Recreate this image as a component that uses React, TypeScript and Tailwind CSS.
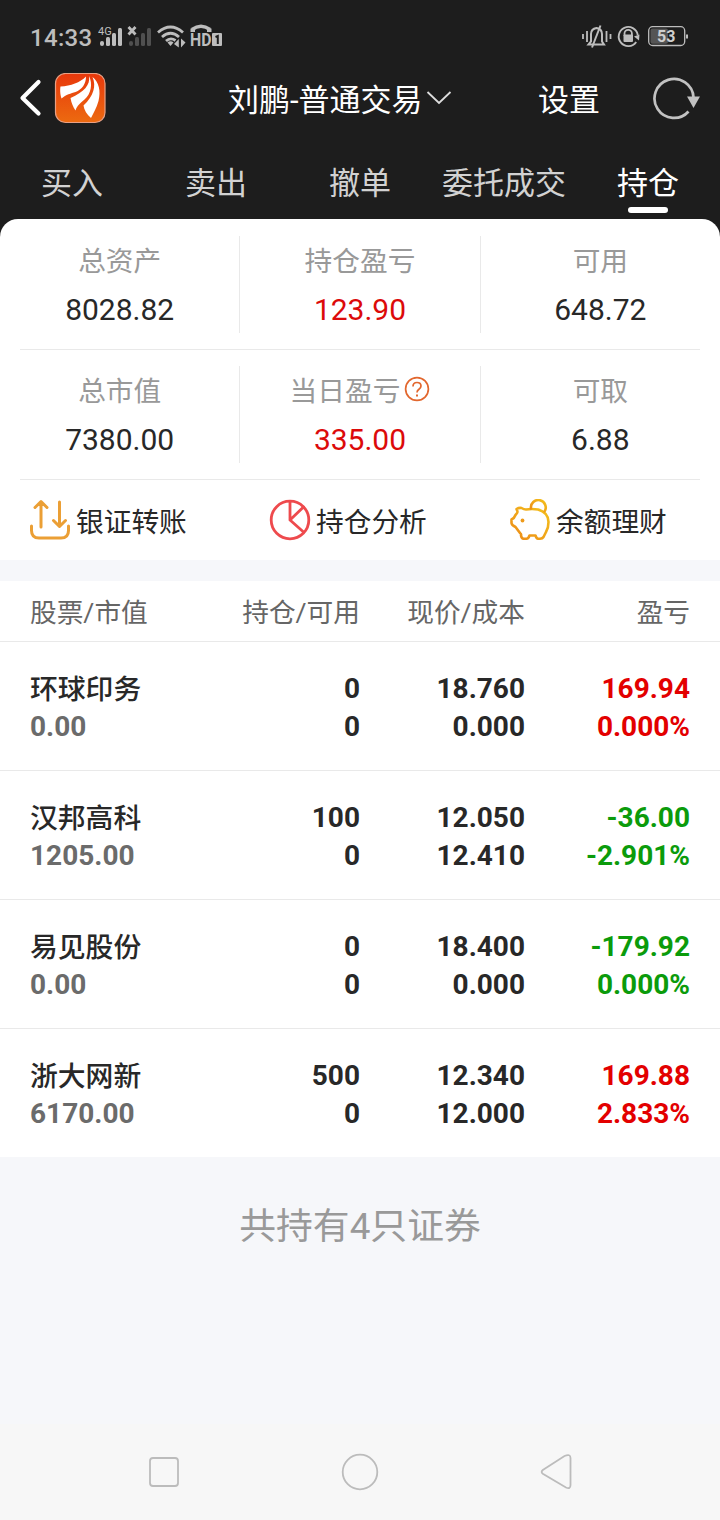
import React from 'react';

type Tone = 'red' | 'green' | 'dark';

const toneClass: Record<Tone, string> = {
  red: 'text-[#e30000]',
  green: 'text-[#0b9b0b]',
  dark: 'text-[#282828]',
};

const holdings: { name: string; value: string; qty: string; avail: string; price: string; cost: string; pl: string; pct: string; tone: Tone }[] = [
  { name: '环球印务', value: '0.00', qty: '0', avail: '0', price: '18.760', cost: '0.000', pl: '169.94', pct: '0.000%', tone: 'red' },
  { name: '汉邦高科', value: '1205.00', qty: '100', avail: '0', price: '12.050', cost: '12.410', pl: '-36.00', pct: '-2.901%', tone: 'green' },
  { name: '易见股份', value: '0.00', qty: '0', avail: '0', price: '18.400', cost: '0.000', pl: '-179.92', pct: '0.000%', tone: 'green' },
  { name: '浙大网新', value: '6170.00', qty: '500', avail: '0', price: '12.340', cost: '12.000', pl: '169.88', pct: '2.833%', tone: 'red' },
];

function StatusBar() {
  return (
    <div className="flex h-[74px] items-center pl-[30px] pr-[32px] text-[#bdbdbd]">
      <span className="w-[68px] pt-[1px] text-[24px] leading-[30px] font-medium tracking-[0.3px]">14:33</span>
      <svg className="h-[26px] w-[126px]" viewBox="98 24 126 26" fill="#bdbdbd">
        <text x="98" y="35" fontSize="11" fontFamily="Roboto">4G</text>
        <rect x="100" y="41" width="4" height="5" rx="2" />
        <rect x="106" y="37" width="4" height="9" rx="1.5" />
        <rect x="112" y="33" width="4" height="13" rx="1.5" />
        <rect x="118" y="28" width="4" height="18" rx="1.5" />
        <path d="M128.500 27l7 7.500M135.500 27l-7 7.500" stroke="#bdbdbd" strokeWidth="2.800" />
        <g fill="#505050">
          <rect x="129" y="41" width="4" height="5" rx="2" />
          <rect x="135" y="37" width="4" height="9" rx="1.5" />
          <rect x="141" y="33" width="4" height="13" rx="1.5" />
          <rect x="147" y="28" width="4" height="18" rx="1.500" />
        </g>
        <g fill="none" stroke="#bdbdbd" strokeWidth="2.800">
          <path d="M158 32.500Q170.500 21.500 183 32.500" />
          <path d="M162 37Q170.500 29.500 179 37" />
          <path d="M166 41Q170.500 37 175.500 40.500" />
        </g>
        <path d="M167.500 42.500Q170.500 40 173.500 42.500L170.500 46Z" />
        <path d="M178.800 39v8.500l-4.800-3.500zM181 38.500l4.500 4-4.500 5z" />
        <path d="M192 29.500Q201 23 210 29.500" fill="none" stroke="#bdbdbd" strokeWidth="3.400" />
        <path d="M190.500 28.500h4.500v3.500h-4.500zM207 28.500h4.500v3.500H207z" />
        <text x="190" y="46" fontSize="18" fontWeight="700" fontFamily="Roboto" textLength="21.500" lengthAdjust="spacingAndGlyphs">HD</text>
        <rect x="212" y="33" width="10" height="13" rx="1" />
        <path d="M215.500 37l2.300-1v8" stroke="#1d1d1d" strokeWidth="2" fill="none" />
      </svg>
      <svg className="ml-auto h-[26px] w-[108px]" viewBox="580 24 108 26" fill="none" stroke="#bdbdbd">
        <path d="M583 34v5M587 31v11M606.500 31v11M610.500 34v5" strokeWidth="1.800" />
        <path d="M588.500 44.500h15.500l-2-3V34q0-5-5.500-6q-5.500 1-5.500 6v7.500z" strokeWidth="2" />
        <path d="M600.500 25.500l-8.500 22" strokeWidth="2" />
        <path d="M636.200 42A9.600 9.600 0 1 1 637.800 35" strokeWidth="1.900" />
        <path d="M634 36.500l5 4 .5-6z" fill="#bdbdbd" stroke="none" />
        <path d="M624.500 36v-2.500a3.700 3.700 0 0 1 7.400 0V36" strokeWidth="1.800" />
        <rect x="623.500" y="34.500" width="9.500" height="7.500" rx="1" fill="#bdbdbd" stroke="none" />
        <rect x="648.700" y="26.700" width="36" height="18.800" rx="4" strokeWidth="1.300" />
        <rect x="650.500" y="28.500" width="17.500" height="15.200" rx="2" fill="#555" stroke="none" />
        <path d="M686 34.500h2v4h-2z" fill="#bdbdbd" stroke="none" />
        <text x="657" y="42" fontSize="16" fontWeight="700" fontFamily="Roboto" fill="#cfcfcf" stroke="none">53</text>
      </svg>
    </div>
  );
}

function TitleBar() {
  return (
    <div className="flex h-[50px] items-center pl-[18px] pr-[18px] text-white">
      <svg className="h-[40px] w-[26px]" viewBox="18 79 26 40" fill="none" stroke="white" strokeWidth="4.200" strokeLinecap="round" strokeLinejoin="round">
        <path d="M38.500 82L22.500 98l16 15.500" />
      </svg>
      <svg className="ml-[10px] h-[52px] w-[52px]" viewBox="54 73 52 52">
        <defs>
          <linearGradient id="logo" x1="0" y1="0" x2="0" y2="1">
            <stop offset="0" stopColor="#e8380c" />
            <stop offset="1" stopColor="#ec6a10" />
          </linearGradient>
        </defs>
        <rect x="55.500" y="73.500" width="49.500" height="49" rx="10" fill="url(#logo)" stroke="#e9a084" strokeWidth="1.200" />
        <g fill="white">
          <path d="M86 76.500C80 82.500 71 86 60.500 86.500C60 89 60 94 61.500 98.500C66 94.500 71 93.500 75.500 92C82 89.500 86 84 86 76.500Z" />
          <path d="M89 76C90.500 85 84 92 70.500 98C71.500 103.500 73 106.500 75.500 110.500C77 105.500 80.500 103 84.500 99.500C91 94 93 84 89 76Z" />
          <path d="M92.500 77C96.500 86 93.500 96 83.500 105.500C84 110 87 114.500 91 118C93.500 113 96.500 108 98.500 101C101 91 99 82 92.500 77Z" />
        </g>
      </svg>
      <div className="ml-[122px] flex w-[226px] items-center">
        <span className="pt-[4px] text-[31px] leading-[44px] whitespace-nowrap">刘鹏-普通交易</span>
        <svg className="mb-[2px] ml-[3px] h-[18px] w-[26px] shrink-0" viewBox="0 0 26 18" fill="none" stroke="#ddd" strokeWidth="1.800">
          <path d="M1.500 3l11.500 11L24.500 3" />
        </svg>
      </div>
      <span className="ml-[84px] pt-[4px] text-[31px] leading-[44px]">设置</span>
      <svg className="ml-auto h-[46px] w-[50px]" viewBox="652 75 50 46" fill="none">
        <path d="M688.500 110.500A19.500 19.500 0 1 1 693.500 96.500" stroke="#c2c2c2" strokeWidth="2.700" />
        <path d="M687 95.500h13l-6.500 11.500z" fill="#c2c2c2" />
      </svg>
    </div>
  );
}

function Tabs() {
  const tabs = ['买入', '卖出', '撤单', '委托成交', '持仓'];
  return (
    <div className="grid h-[95px] grid-cols-5 pt-[38px] text-center text-[31px] leading-[44px]">
      {tabs.map((t, i) => (
        <div key={t} className={i === 4 ? 'flex flex-col items-center text-white' : 'text-[#d2d2d2]'}>
          <span>{t}</span>
          {i === 4 && <span className="mt-[1px] h-[6px] w-[40px] rounded-[3px] bg-white" />}
        </div>
      ))}
    </div>
  );
}

function Stat({ label, value, red, help, divider }: { label: string; value: string; red?: boolean; help?: boolean; divider?: boolean }) {
  return (
    <div className={`flex h-[97px] flex-1 flex-col items-center ${divider ? 'border-r border-[#e9e9e9]' : ''}`}>
      <div className="flex h-[52px] items-center text-[27.700px] leading-[40px] text-[#999]">
        {label}
        {help && (
          <svg className="mb-[6px] ml-[4px] h-[26px] w-[26px]" viewBox="0 0 26 26" fill="none" stroke="#e2672e" strokeWidth="1.700">
            <circle cx="13" cy="13" r="11.400" />
            <path d="M9 10.500Q9 6.500 13 6.500Q17 6.500 17 10Q17 11.800 15 13.300Q13 14.800 13 16.500" />
            <path d="M13 18.500v2" strokeWidth="2" />
          </svg>
        )}
      </div>
      <div className={`mt-[2px] text-[30px] leading-[40px] ${red ? 'text-[#dc0a0a]' : 'text-[#282828]'}`}>{value}</div>
    </div>
  );
}

function Action({ label, children }: { label: string; children: React.ReactNode }) {
  return (
    <div className="flex w-[240px] items-center pl-[29px] text-[27.700px] leading-[40px] text-[#282828]">
      <svg className="mr-[5px] h-[42px] w-[42px]" viewBox="0 0 42 42" fill="none" strokeLinecap="round" strokeLinejoin="round">
        {children}
      </svg>
      <span className="pt-[5px]">{label}</span>
    </div>
  );
}

export default function App() {
  return (
    <div className="flex h-[1520px] w-[720px] flex-col overflow-hidden bg-[#f6f7fa] font-[Roboto,'Noto_Sans_CJK_SC',sans-serif]">
      <header className="h-[239px] shrink-0 bg-[#1d1d1d]">
        <StatusBar />
        <TitleBar />
        <Tabs />
      </header>
      <section className="relative z-10 -mt-[20px] h-[341px] shrink-0 rounded-t-[18px] bg-white">
        <div className="mx-[20px] flex h-[131px] border-b border-[#e9e9e9] pt-[17px]">
          <div className="-ml-[20px] flex w-[720px] shrink-0">
            <Stat label="总资产" value="8028.82" divider />
            <Stat label="持仓盈亏" value="123.90" red divider />
            <Stat label="可用" value="648.72" />
          </div>
        </div>
        <div className="mx-[20px] flex h-[130px] border-b border-[#e9e9e9] pt-[16px]">
          <div className="-ml-[20px] flex w-[720px] shrink-0">
            <Stat label="总市值" value="7380.00" divider />
            <Stat label="当日盈亏" value="335.00" red help divider />
            <Stat label="可取" value="6.88" />
          </div>
        </div>
        <div className="flex h-[80px] items-center">
          <Action label="银证转账">
            <g stroke="#eb9f35" strokeWidth="3">
              <path d="M12 28V3M6 8.500L12 2.500l6 6M30.500 3v24M24.500 21.500l6 6l6-6" />
              <path d="M2.500 27v4.500Q2.500 39 10 39h22Q39.500 39 39.500 31.500V27" />
            </g>
          </Action>
          <Action label="持仓分析">
            <g stroke="#ee4a4d" strokeWidth="2.800">
              <circle cx="21" cy="21" r="18.800" />
              <path d="M21 2.500V21L34.500 8M21 21l13.500 12" />
            </g>
          </Action>
          <Action label="余额理财">
            <defs>
              <linearGradient id="pig" x1="0" y1="1" x2="1" y2="0">
                <stop offset="0" stopColor="#ec8a18" />
                <stop offset="1" stopColor="#f4c21c" />
              </linearGradient>
            </defs>
            <g stroke="url(#pig)" strokeWidth="2.600">
              <path d="M7.500 10Q10 8.500 12.500 9Q15 10.500 17 10.500Q23 9.500 29 10.500Q39.500 13.500 39.500 23Q39.500 29 37 33L34.500 38Q33.500 39.700 31 39.700H29Q27.500 39.500 26.500 36.500H20.500Q19.500 39.700 17.500 39.700H14.500Q12.500 39.500 12 36.500Q12.500 35 11 34L6.500 28Q2.500 26 2.500 24V20.500Q5.500 19 6.500 16Q9 13.500 8.500 12.500Z" />
              <path d="M22 9.500A7.400 7.400 0 1 1 35.500 12.500" />
            </g>
            <circle cx="13.500" cy="21.500" r="1.900" fill="#ee9a1a" />
          </Action>
        </div>
      </section>
      <section className="mt-[21px] shrink-0 bg-white">
        <div className="grid h-[61px] grid-cols-[165px_165px_165px_165px] items-center border-b border-[#e9e9e9] px-[30px] pt-[3px] text-[26.700px] leading-[40px] text-[#666]">
          <span>股票/市值</span>
          <span className="text-right">持仓/可用</span>
          <span className="text-right">现价/成本</span>
          <span className="text-right">盈亏</span>
        </div>
        {holdings.map((h, i) => (
          <div
            key={h.name}
            className={`grid grid-cols-[165px_165px_165px_165px] px-[30px] pt-[28px] text-[28px] leading-[38px] font-bold text-[#282828] ${i < 3 ? 'h-[129px] border-b border-[#e9e9e9]' : 'h-[128px]'}`}
          >
            <div>
              <div className="h-[38px] pt-[1px] text-[27.800px] font-medium">{h.name}</div>
              <div className="h-[38px] text-[#6b6b6b]">{h.value}</div>
            </div>
            <div className="text-right">
              <div>{h.qty}</div>
              <div>{h.avail}</div>
            </div>
            <div className="text-right">
              <div>{h.price}</div>
              <div>{h.cost}</div>
            </div>
            <div className={`text-right ${toneClass[h.tone]}`}>
              <div>{h.pl}</div>
              <div>{h.pct}</div>
            </div>
          </div>
        ))}
      </section>
      <p className="mt-[43px] text-center text-[36.800px] leading-[54px] text-[#999]">共持有4只证券</p>
      <nav className="mt-auto flex h-[96px] shrink-0 items-center justify-between bg-[#f7f7f7] px-[144px]">
        <svg className="h-[40px] w-[40px]" viewBox="0 0 40 40" fill="none" stroke="#bcbcbc" strokeWidth="1.800">
          <rect x="6" y="6" width="28" height="28" rx="3" />
        </svg>
        <svg className="h-[40px] w-[40px]" viewBox="0 0 40 40" fill="none" stroke="#bcbcbc" strokeWidth="1.800">
          <circle cx="20" cy="20" r="17.300" />
        </svg>
        <svg className="h-[40px] w-[40px]" viewBox="0 0 40 40" fill="none" stroke="#bcbcbc" strokeWidth="1.800">
          <path d="M6.800 18L28.500 4Q34.500 1.500 34.500 6V33Q34.500 37.500 30 35.500L6.800 21.700Q4.500 20 6.800 18Z" />
        </svg>
      </nav>
    </div>
  );
}
